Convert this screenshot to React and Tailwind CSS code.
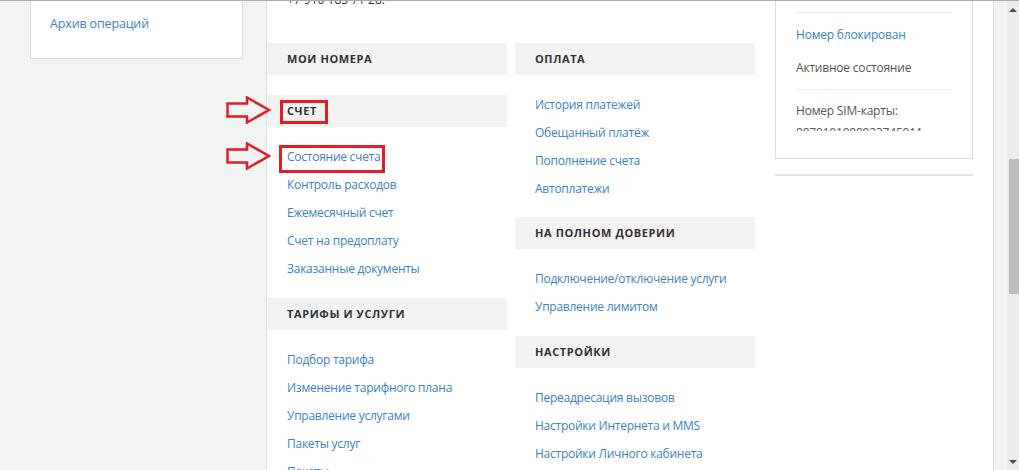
import React from 'react';

// Разделы меню: левая и правая колонки
const leftSections = [
  { title: "Мои номера", links: [], gap: "mb-[20px]" },
  {
    title: "Счет",
    links: ["Состояние счета", "Контроль расходов", "Ежемесячный счет", "Счет на предоплату", "Заказанные документы"],
    gap: "mb-[15px]",
  },
  {
    title: "Тарифы и услуги",
    links: ["Подбор тарифа", "Изменение тарифного плана", "Управление услугами", "Пакеты услуг", "Пакеты"],
    gap: "mb-[15px]",
  },
];

const rightSections = [
  { title: "Оплата", links: ["История платежей", "Обещанный платёж", "Пополнение счета", "Автоплатежи"], gap: "mb-[14px]" },
  { title: "На полном доверии", links: ["Подключение/отключение услуги", "Управление лимитом"], gap: "mb-[15px]" },
  { title: "Настройки", links: ["Переадресация вызовов", "Настройки Интернета и MMS", "Настройки Личного кабинета"], gap: "mb-[15px]" },
];

function Section({ title, links, gap }) {
  return (
    <div className={gap}>
      <div className="h-[32px] bg-[#f2f2f2] flex items-center px-[20px]">
        <span className="text-[11px] font-bold uppercase tracking-[0.6px] text-[#333]">{title}</span>
      </div>
      {links.length > 0 && (
        <ul className="pt-[16px] px-[20px]">
          {links.map((l) => (
            <li key={l} className="h-[28px] leading-[28px] text-[12px] tracking-[-0.25px] text-[#3b82c4] whitespace-nowrap">
              {l}
            </li>
          ))}
        </ul>
      )}
    </div>
  );
}

// Красная стрелка-указатель (контур)
function RedArrow({ className }) {
  return (
    <svg className={className} width="46" height="28" viewBox="0 0 46 28">
      <path
        d="M1.5 7.5 H21 V1.5 L43 14 L21 26.5 V20.5 H1.5 Z"
        fill="none"
        stroke="#e21d25"
        strokeWidth="2.5"
        strokeLinejoin="miter"
      />
    </svg>
  );
}

export default function App() {
  return (
    <div
      className="relative flex h-[470px] w-[1019px] overflow-hidden border-t border-[#ababab] bg-[#f2f3f3]"
      style={{ fontFamily: '"Open Sans", "Noto Sans", sans-serif' }}
    >
      {/* Левая панель */}
      <div className="w-[266px] shrink-0">
        <div className="ml-[30px] w-[213px] h-[58px] bg-white border-x border-b border-[#dcdcdc] px-[19px] pt-[9px]">
          <span className="text-[12.5px] tracking-[-0.15px] text-[#3b82c4]">Архив операций</span>
        </div>
      </div>

      {/* Основная колонка */}
      <div className="w-[728px] shrink-0 bg-white border-x border-[#e0e0e0] flex flex-col">
        <div className="h-[52px] shrink-0 px-[20px] -mt-[10px] text-[12px] text-[#333] leading-[18px]">+7 910 185 71 28:</div>
        <div className="flex shrink-0">
          <div className="w-[240px]">
            {leftSections.map((s) => (
              <Section key={s.title} {...s} />
            ))}
          </div>
          <div className="w-[240px] ml-[8px]">
            {rightSections.map((s) => (
              <Section key={s.title} {...s} />
            ))}
          </div>
          <div className="w-[198px] ml-[20px] -mt-[42px]">
            <div className="h-[158px] border-x border-b border-[#dedede] px-[20px]">
              <div className="h-[130px] overflow-hidden">
                <div className="h-[11px]" />
                <div className="h-px bg-[#ececec]" />
                <div className="pt-[11px] leading-[22px] text-[12px] tracking-[-0.2px] text-[#3b82c4]">Номер блокирован</div>
                <div className="pt-[11px] leading-[22px] text-[12px] tracking-[-0.2px] text-[#555]">Активное состояние</div>
                <div className="h-[10px]" />
                <div className="h-px bg-[#ececec]" />
                <div className="pt-[10px] leading-[22px] text-[12px] tracking-[-0.2px] text-[#555]">
                  Номер SIM-карты:
                  <br />
                  8970101088923745011
                </div>
              </div>
            </div>
            <div className="mt-[15px] h-[2px] bg-[#e2e2e2]" />
          </div>
        </div>
      </div>

      {/* Поле справа и полоса прокрутки */}
      <div className="w-[13px] shrink-0 bg-[#f1f2f2]" />
      <div className="w-[12px] shrink-0 bg-[#ececec] flex flex-col items-center">
        <div className="h-[7px]" />
        <div className="w-0 h-0 border-x-[4px] border-x-transparent border-b-[4px] border-b-[#505050]" />
        <div className="h-[147px]" />
        <div className="w-[10px] ml-[2px] h-[135px] bg-[#bdbdbd]" />
        <div className="flex-1" />
        <div className="w-0 h-0 border-x-[4px] border-x-transparent border-t-[4px] border-t-[#505050]" />
        <div className="h-[6px]" />
      </div>

      {/* Красные пометки поверх содержимого */}
      <RedArrow className="absolute left-[226px] top-[95px]" />
      <div className="absolute left-[280px] top-[99px] w-[48px] h-[24px] border-[3px] border-[#e21d25]" />
      <RedArrow className="absolute left-[226px] top-[141px]" />
      <div className="absolute left-[279px] top-[144px] w-[106px] h-[28px] border-[3px] border-[#e21d25]" />
    </div>
  );
}
